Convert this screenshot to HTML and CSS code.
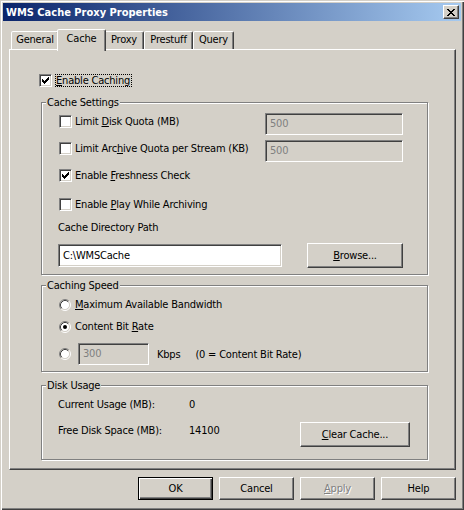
FILE: index.html
```html
<!DOCTYPE html>
<html>
<head>
<meta charset="utf-8">
<title>WMS Cache Proxy Properties</title>
<link rel="stylesheet" href="styles.css">
</head>
<body>
<div class="window">
  <div class="titlebar">
    <span class="title">WMS Cache Proxy Properties</span>
    <span class="close"><svg width="8" height="7" viewBox="0 0 8 7" shape-rendering="crispEdges"><path fill="#000" d="M0 0h2v1h-2zM6 0h2v1h-2zM1 1h2v1h-2zM5 1h2v1h-2zM2 2h4v1h-4zM3 3h2v1h-2zM2 4h4v1h-4zM1 5h2v1h-2zM5 5h2v1h-2zM0 6h2v1h-2zM6 6h2v1h-2z"/></svg></span>
  </div>
  <div class="content">
    <div class="tabs">
      <div class="tab t-general">General</div>
      <div class="tab t-cache active">Cache</div>
      <div class="tab t-proxy">Proxy</div>
      <div class="tab t-prestuff">Prestuff</div>
      <div class="tab t-query">Query</div>
    </div>
    <div class="panel">
      <div class="enable-row">
        <span class="check"><svg width="7" height="7" viewBox="0 0 7 7" shape-rendering="crispEdges"><path fill="#000" d="M0 2h1v3h-1zM1 3h1v3h-1zM2 4h1v3h-1zM3 3h1v3h-1zM4 2h1v3h-1zM5 1h1v3h-1zM6 0h1v3h-1z"/></svg></span>
        <span class="focus"><u>E</u>nable Caching</span>
      </div>

      <div class="group g-settings">
        <span class="legend">Cache Settings</span>
        <div class="qrow">
          <div class="opt qlabel"><span class="check"></span><span class="txt">Limit <u>D</u>isk Quota (MB)</span></div>
          <div class="field disabled w-quota">500</div>
        </div>
        <div class="qrow second">
          <div class="opt qlabel"><span class="check"></span><span class="txt">Limit Arc<u>h</u>ive Quota per Stream (KB)</span></div>
          <div class="field disabled w-quota">500</div>
        </div>
        <div class="opt r-fresh"><span class="check"><svg width="7" height="7" viewBox="0 0 7 7" shape-rendering="crispEdges"><path fill="#000" d="M0 2h1v3h-1zM1 3h1v3h-1zM2 4h1v3h-1zM3 3h1v3h-1zM4 2h1v3h-1zM5 1h1v3h-1zM6 0h1v3h-1z"/></svg></span><span class="txt">Enable <u>F</u>reshness Check</span></div>
        <div class="opt r-play"><span class="check"></span><span class="txt">Enable <u>P</u>lay While Archiving</span></div>
        <div class="dir-label">Cache Directory Path</div>
        <div class="dir-row">
          <div class="field w-dir">C:\WMSCache</div>
          <div class="btn w-browse"><span><u>B</u>rowse...</span></div>
        </div>
      </div>

      <div class="group g-speed">
        <span class="legend">Caching Speed</span>
        <div class="opt"><svg class="radio" width="12" height="12" viewBox="0 0 12 12"><circle cx="6" cy="6" r="4.5" fill="#fff"/><path d="M2.11 9.89A5.5 5.5 0 0 1 9.89 2.11" fill="none" stroke="#808080"/><path d="M9.89 2.11A5.5 5.5 0 0 1 2.11 9.89" fill="none" stroke="#fff"/><path d="M2.82 9.18A4.5 4.5 0 0 1 9.18 2.82" fill="none" stroke="#404040"/><path d="M9.18 2.82A4.5 4.5 0 0 1 2.82 9.18" fill="none" stroke="#d4d0c8"/></svg><span class="txt"><u>M</u>aximum Available Bandwidth</span></div>
        <div class="opt r-rate"><svg class="radio" width="12" height="12" viewBox="0 0 12 12"><circle cx="6" cy="6" r="4.5" fill="#fff"/><path d="M2.11 9.89A5.5 5.5 0 0 1 9.89 2.11" fill="none" stroke="#808080"/><path d="M9.89 2.11A5.5 5.5 0 0 1 2.11 9.89" fill="none" stroke="#fff"/><path d="M2.82 9.18A4.5 4.5 0 0 1 9.18 2.82" fill="none" stroke="#404040"/><path d="M9.18 2.82A4.5 4.5 0 0 1 2.82 9.18" fill="none" stroke="#d4d0c8"/><circle cx="6" cy="6" r="2" fill="#000"/></svg><span class="txt">Content Bit <u>R</u>ate</span></div>
        <div class="opt r-kbps"><svg class="radio" width="12" height="12" viewBox="0 0 12 12"><circle cx="6" cy="6" r="4.5" fill="#fff"/><path d="M2.11 9.89A5.5 5.5 0 0 1 9.89 2.11" fill="none" stroke="#808080"/><path d="M9.89 2.11A5.5 5.5 0 0 1 2.11 9.89" fill="none" stroke="#fff"/><path d="M2.82 9.18A4.5 4.5 0 0 1 9.18 2.82" fill="none" stroke="#404040"/><path d="M9.18 2.82A4.5 4.5 0 0 1 2.82 9.18" fill="none" stroke="#d4d0c8"/></svg><div class="field disabled w-kbps">300</div><span class="kbps">Kbps</span><span class="note">(0 = Content Bit Rate)</span></div>
      </div>

      <div class="group g-disk">
        <span class="legend">Disk Usage</span>
        <div class="drow">
          <span class="dlabel">Current Usage (MB):</span><span class="dval">0</span>
        </div>
        <div class="drow second">
          <span class="dlabel">Free Disk Space (MB):</span><span class="dval">14100</span>
          <div class="btn w-clear"><span><u>C</u>lear Cache...</span></div>
        </div>
      </div>
    </div>

    <div class="buttons">
      <div class="btn default">OK</div>
      <div class="btn">Cancel</div>
      <div class="btn disabled"><span><u>A</u>pply</span></div>
      <div class="btn">Help</div>
    </div>
  </div>
</div>
</body>
</html>
```

FILE: styles.css
```css
* { box-sizing: border-box; }
html, body { margin: 0; padding: 0; }
body {
  font-family: "DejaVu Sans Condensed", "DejaVu Sans", sans-serif;
  font-size: 11px;
  letter-spacing: -0.2px;
  color: #000;
  background: #d4d0c8;
}
u { text-underline-offset: 1px; }

.window {
  width: 464px;
  height: 510px;
  padding: 3px;
  background: #d4d0c8;
  box-shadow: inset 1px 1px 0 #d4d0c8, inset 2px 2px 0 #fff,
              inset -1px -1px 0 #404040, inset -2px -2px 0 #808080;
}

.titlebar {
  height: 18px;
  display: flex;
  align-items: center;
  justify-content: space-between;
  padding: 0 2px 0 3px;
  background: linear-gradient(to right, #0a246a, #a6caf0);
  color: #fff;
  font-weight: bold;
  letter-spacing: 0;
  line-height: 13px;
}
.close {
  width: 16px;
  height: 14px;
  display: flex;
  align-items: center;
  justify-content: center;
  background: #d4d0c8;
  border: 1px solid;
  border-color: #fff #404040 #404040 #fff;
  box-shadow: inset -1px -1px 0 #808080;
}
.close svg { display: block; }

.content { padding: 0 5px 0 6px; }

.tabs {
  display: flex;
  align-items: flex-end;
  height: 20px;
  margin-top: 8px;
  padding-left: 2px;
}
.tab {
  height: 18px;
  text-align: center;
  line-height: 16px;
  border: 1px solid;
  border-bottom: 0;
  border-color: #fff #404040 transparent #fff;
  border-radius: 2px 2px 0 0;
  box-shadow: inset -1px 0 0 #808080;
  background: #d4d0c8;
  white-space: nowrap;
}
.tab.active {
  position: relative;
  z-index: 2;
  height: 22px;
  margin: 0 -2px -2px;
  line-height: 17px;
}
.t-general { width: 48px; }
.t-cache { width: 49px; }
.t-proxy { width: 40px; }
.t-prestuff { width: 49px; }
.t-query { width: 41px; }

.panel {
  height: 421px;
  border: 1px solid;
  border-color: #fff #404040 #404040 #fff;
  box-shadow: inset -1px -1px 0 #808080;
  padding: 24px 0 0 31px;
}

.enable-row {
  display: flex;
  align-items: center;
  height: 13px;
  margin-left: -2px;
}
.focus {
  margin-left: 3px;
  height: 13px;
  line-height: 11px;
  padding: 0 1px 0 0;
  border: 1px dotted #000;
}

.check {
  flex: none;
  width: 13px;
  height: 13px;
  display: flex;
  align-items: center;
  justify-content: center;
  background: #fff;
  border: 1px solid;
  border-color: #808080 #fff #fff #808080;
  box-shadow: inset 1px 1px 0 #404040, inset -1px -1px 0 #d4d0c8;
}
.check svg { display: block; }
.radio { flex: none; display: block; }

.group {
  position: relative;
  width: 387px;
  border: 1px solid #808080;
  box-shadow: 1px 1px 0 #fff, inset 1px 1px 0 #fff;
}
.legend {
  position: absolute;
  top: -7px;
  left: 4px;
  padding: 0 1px;
  line-height: 13px;
  background: #d4d0c8;
}

.opt {
  display: flex;
  align-items: center;
  height: 13px;
  line-height: 13px;
  white-space: nowrap;
}
.opt .txt { margin-left: 3px; }
.radio + .txt { margin-left: 4px; }

.field {
  height: 22px;
  line-height: 20px;
  padding-left: 4px;
  background: #fff;
  border: 1px solid;
  border-color: #808080 #fff #fff #808080;
  box-shadow: inset 1px 1px 0 #404040, inset -1px -1px 0 #d4d0c8;
  white-space: nowrap;
}
.field.disabled { background: #d4d0c8; color: #808080; }

.btn {
  display: flex;
  align-items: center;
  justify-content: center;
  width: 75px;
  height: 23px;
  background: #d4d0c8;
  border: 1px solid;
  border-color: #fff #404040 #404040 #fff;
  box-shadow: inset -1px -1px 0 #808080;
  white-space: nowrap;
}
.btn.default {
  border-color: #000;
  box-shadow: inset 1px 1px 0 #fff, inset -1px -1px 0 #404040, inset -2px -2px 0 #808080;
}
.btn.disabled { color: #808080; text-shadow: 1px 1px 0 #fff; }

/* Cache Settings */
.g-settings { margin-top: 15px; padding: 10px 0 6px 17px; }
.qrow { display: flex; height: 22px; }
.qrow.second { margin-top: 5px; }
.qlabel { width: 206px; margin-top: 2px; }
.w-quota { width: 138px; }
.r-fresh { margin-top: 7px; }
.r-play { margin-top: 16px; }
.dir-label { margin-top: 10px; margin-left: -1px; line-height: 13px; height: 13px; }
.dir-row { display: flex; height: 25px; margin-top: 9px; margin-left: -1px; }
.w-dir { width: 224px; height: 23px; line-height: 21px; margin-top: 1px; }
.w-browse { width: 96px; height: 25px; margin-left: 25px; }

/* Caching Speed */
.g-speed { margin-top: 10px; padding: 12px 0 6px 17px; }
.r-rate { margin-top: 9px; }
.r-kbps { margin-top: 10px; height: 22px; }
.w-kbps { width: 71px; margin-left: 7px; }
.kbps { margin-left: 8px; }
.note { margin-left: 15px; }

/* Disk Usage */
.g-disk { margin-top: 13px; padding: 12px 0 12px 16px; }
.drow { display: flex; align-items: flex-start; height: 13px; line-height: 13px; }
.drow.second { height: 25px; margin-top: 11px; }
.drow.second .dlabel, .drow.second .dval { margin-top: 2px; }
.dlabel { width: 131px; }
.dval { width: 111px; }
.w-clear { width: 110px; height: 25px; }

.buttons {
  display: flex;
  justify-content: flex-end;
  gap: 6px;
  margin-top: 7px;
}
```
